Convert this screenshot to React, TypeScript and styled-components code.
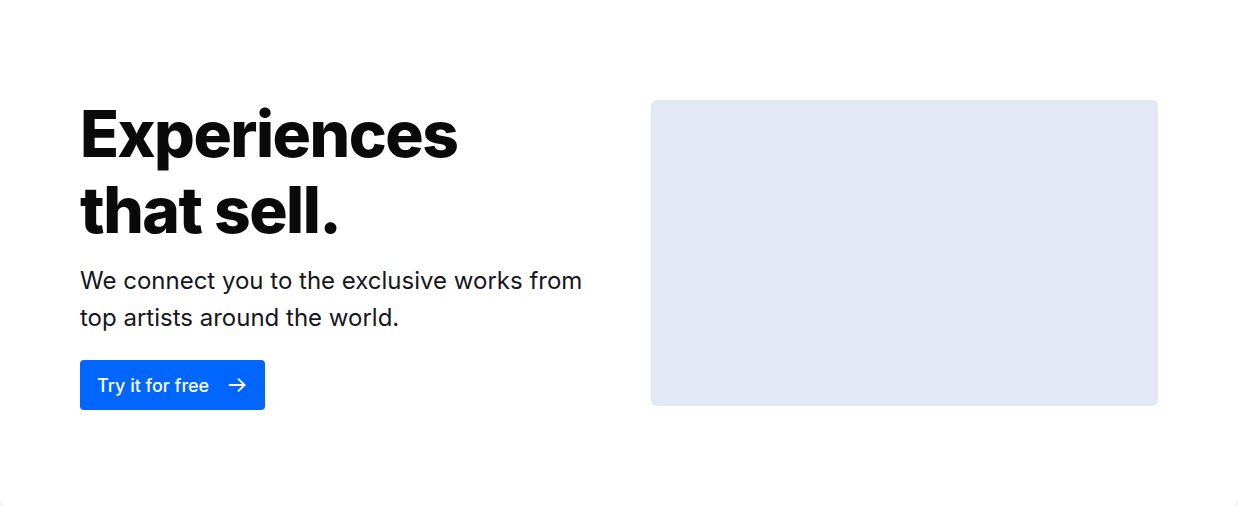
import styled, { createGlobalStyle } from 'styled-components';

const GlobalStyle = createGlobalStyle`
  html, body {
    margin: 0;
    padding: 0;
    background: #f4f4f5;
    font-family: Inter, 'Noto Sans', sans-serif;
    -webkit-font-smoothing: antialiased;
  }
`;

const Card = styled.section`
  box-sizing: border-box;
  height: 506px;
  background: #ffffff;
  border-radius: 0 0 8px 8px;
  padding: 96px 80px 98px;
  display: grid;
  grid-template-columns: 1fr 1fr;
  column-gap: 64px;
  align-items: center;
`;

const Copy = styled.div`
  display: flex;
  flex-direction: column;
  align-items: flex-start;
`;

const Heading = styled.h1`
  margin: 0;
  font-size: 64px;
  line-height: 76px;
  font-weight: 800;
  letter-spacing: -1.5px;
  color: #0a0a0a;
`;

const Lead = styled.p`
  margin: 14px 0 0;
  font-size: 24px;
  line-height: 37px;
  font-weight: 400;
  color: #16161d;
  max-width: 507px;
`;

const Button = styled.button`
  margin-top: 24px;
  display: inline-flex;
  align-items: center;
  gap: 19px;
  height: 50px;
  padding: 0 19px 0 17px;
  border: none;
  border-radius: 4px;
  background: #0066ff;
  color: #ffffff;
  font-family: inherit;
  font-size: 18px;
  font-weight: 500;
  cursor: pointer;
`;

const Media = styled.div`
  height: 306px;
  border-radius: 6px;
  background: #e2e8f4;
`;

const Arrow = () => (
  <svg width='18' height='14' viewBox='0 0 18 14' fill='none' stroke='currentColor' strokeWidth='1.8' strokeLinecap='round' strokeLinejoin='round'>
    <path d='M1.5 7h15' />
    <path d='M10.5 1.2 16.5 7l-6 5.8' />
  </svg>
);

const App = () => (
  <>
    <GlobalStyle />
    <Card>
      <Copy>
        <Heading>
          Experiences
          <br />
          that sell.
        </Heading>
        <Lead>We connect you to the exclusive works from top artists around the world.</Lead>
        <Button>
          Try it for free
          <Arrow />
        </Button>
      </Copy>
      <Media />
    </Card>
  </>
);

export default App;
